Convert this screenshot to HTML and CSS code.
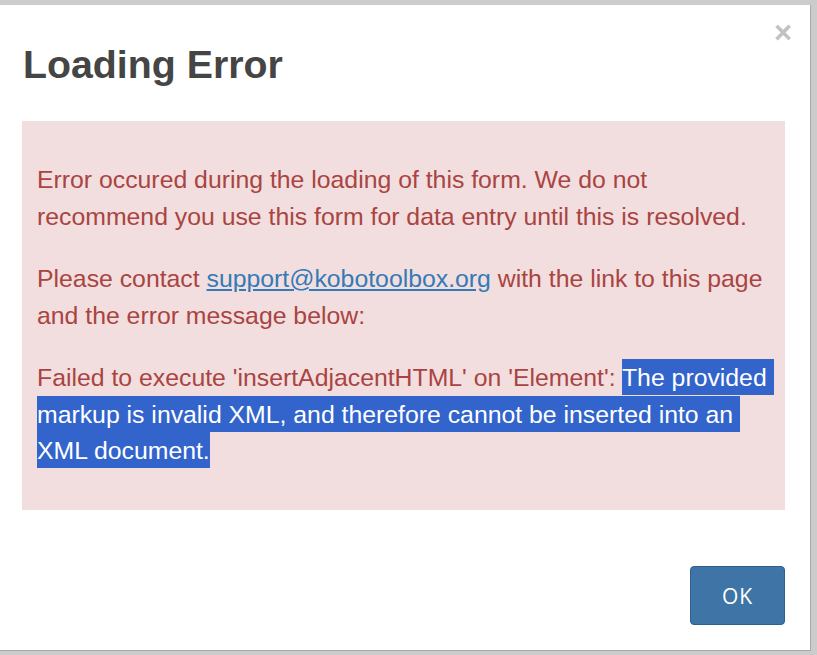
FILE: index.html
```html
<!DOCTYPE html>
<html lang="en">
<head>
<meta charset="utf-8">
<title>Loading Error</title>
<link rel="stylesheet" href="styles.css">
</head>
<body>
<div class="modal">
  <button class="close" type="button" aria-label="Close">×</button>
  <h1 class="modal-title">Loading Error</h1>
  <div class="alert">
    <p>Error occured during the loading of this form. We do not recommend you use this form for data entry until this is resolved.</p>
    <p>Please contact <a href="#">support@kobotoolbox.org</a> with the link to this page and the error message below:</p>
    <p>Failed to execute 'insertAdjacentHTML' on 'Element': <span class="sel">The provided markup is invalid XML, and therefore cannot be inserted into an XML document.</span></p>
  </div>
  <div class="footer">
    <button class="btn-ok" type="button">OK</button>
  </div>
</div>
</body>
</html>
```
FILE: styles.css
```css
html, body {
  margin: 0;
  padding: 0;
  background: #cccccc;
  height: 100%;
  overflow: hidden;
}
.modal {
  position: relative;
  box-sizing: border-box;
  margin-top: 5px;
  width: 811px;
  height: 646px;
  background: #ffffff;
  border-right: 1px solid #a9a9a9;
  border-bottom: 1px solid #a9a9a9;
  padding: 36px 25px 25px 22px;
  display: flex;
  flex-direction: column;
  font-family: "Liberation Sans", Arial, sans-serif;
}
.close {
  position: absolute;
  top: 12px;
  right: 18px;
  background: none;
  border: 0;
  padding: 0;
  font-family: "Liberation Sans", Arial, sans-serif;
  font-size: 31px;
  font-weight: bold;
  line-height: 1;
  color: #c2c2c2;
  cursor: pointer;
}
.modal-title {
  margin: 0 0 34px 1px;
  font-size: 39.3px;
  line-height: 46px;
  font-weight: bold;
  color: #454545;
}
.alert {
  background: #f2dede;
  color: #a94442;
  padding: 41px 15px 40px 15px;
  font-size: 24.8px;
  line-height: 36.5px;
}
.alert p {
  margin: 0 0 26px;
}
.alert p:last-child {
  margin-bottom: 0;
}
.alert a {
  color: #337ab7;
  text-decoration: underline;
}
.sel {
  background: #3264cc;
  color: #ffffff;
  padding: 5px 0 4px;
  white-space: pre-wrap;
}
.footer {
  margin-top: auto;
  display: flex;
  justify-content: flex-end;
}
.btn-ok {
  width: 95px;
  height: 59px;
  background: #3e74a6;
  border: 1px solid #2e5f8e;
  border-radius: 4px;
  color: #ffffff;
  font-family: "Open Sans", "DejaVu Sans", sans-serif;
  font-size: 21px;
  letter-spacing: 1px;
  cursor: pointer;
}
```
